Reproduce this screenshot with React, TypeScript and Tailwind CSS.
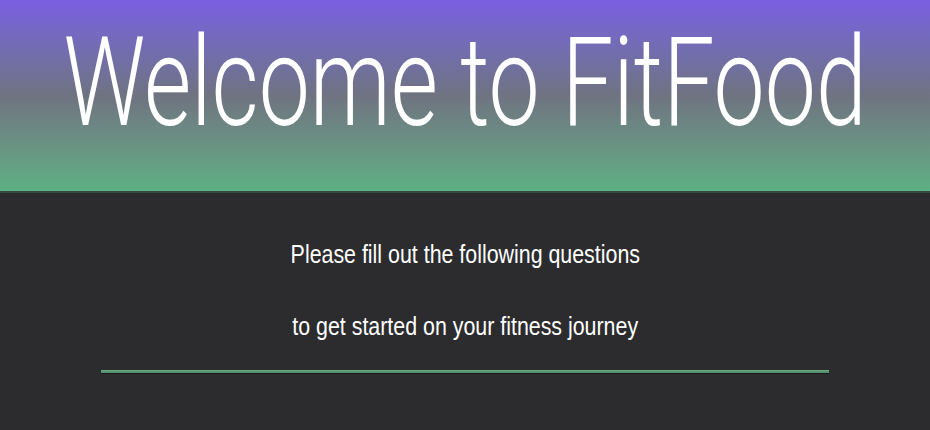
import React from 'react';

const App: React.FC = () => {
  return (
    <div className="min-h-screen bg-[#2c2c2e]" style={{ fontFamily: '"Liberation Sans", Arial, sans-serif' }}>
      {/* Header */}
      <header className="h-[193px] border-b-2 border-[#35493f] bg-linear-to-b from-[#7a5ee2] via-[#6f7381] to-[#5db083] flex justify-center overflow-hidden">
        <h1 className="mt-[15px] text-[125px] leading-[136px] font-light text-white whitespace-nowrap scale-x-[0.73] font-[Roboto,sans-serif]">
          Welcome to FitFood
        </h1>
      </header>

      <main className="flex flex-col items-center">
        <p className="mt-[43px] text-[25px] leading-[36px] text-white whitespace-nowrap scale-x-[0.855]">
          Please fill out the following questions
        </p>
        <p className="mt-[36px] text-[25px] leading-[36px] text-white whitespace-nowrap scale-x-[0.855]">
          to get started on your fitness journey
        </p>
        <div className="mt-[26px] w-[728px] h-[3px] border-t border-[#6aa884] bg-[#56926f] shadow-[0_1px_0_#161a18]" />
      </main>
    </div>
  );
};

export default App;
